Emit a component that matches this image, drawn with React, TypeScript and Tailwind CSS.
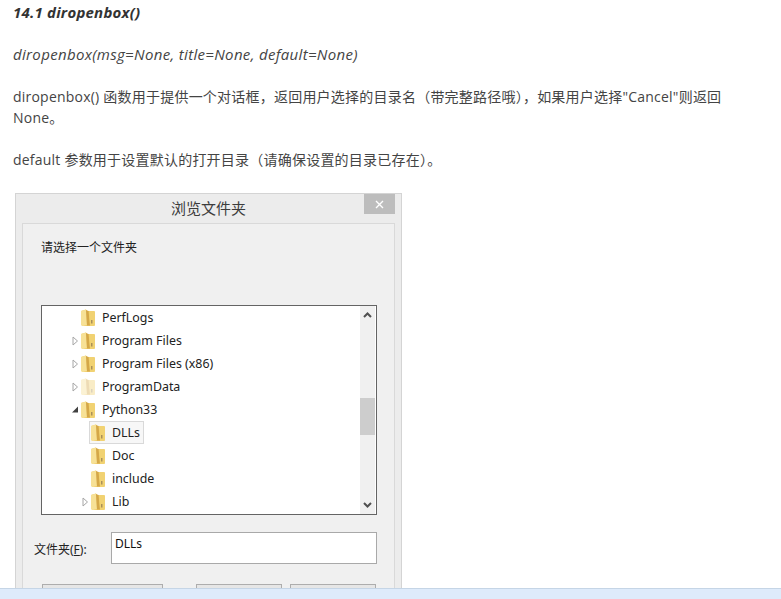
const textFont = { fontFamily: '"Open Sans", "Noto Sans CJK SC", sans-serif' };

function Folder({ faded }: { faded?: boolean }) {
  return (
    <svg width="16" height="18" viewBox="0 0 16 18" className={faded ? 'shrink-0 opacity-40' : 'shrink-0'}>
      <path d="M1 2 L6 0.5 L7 2 L14 2 L15 3 L15 16 L14 17 L3 17 L1 16 Z" fill="#efcb66" />
      <path d="M1 2 L6 0.5 L7 16 L3 17 L1 16 Z" fill="#f7e196" />
      <path d="M6 1 L8.5 2 L10 16.5 L7 16.5 Z" fill="#d4a748" />
      <path d="M9 2 L14 2 L15 3 L15 16 L14 17 L10 17 Z" fill="#f1d272" />
      <path d="M11 11 L12.5 11 L12.5 14.5 L11 14.5 Z" fill="#a9905a" />
    </svg>
  );
}

function Arrow({ state }: { state: 'none' | 'closed' | 'open' }) {
  if (state === 'none') return <span className="w-2 shrink-0" />;
  if (state === 'open') {
    return (
      <svg width="8" height="9" viewBox="0 0 8 9" className="shrink-0">
        <path d="M1 7.5 L7 7.5 L7 1.5 Z" fill="#404040" />
      </svg>
    );
  }
  return (
    <svg width="8" height="10" viewBox="0 0 8 10" className="shrink-0">
      <path d="M2 1 L6.5 5 L2 9 Z" fill="#fff" stroke="#a6a6a6" />
    </svg>
  );
}

const rows = [
  { name: 'PerfLogs', indent: 'pl-[29px]', arrow: 'none' as const },
  { name: 'Program Files', indent: 'pl-[29px]', arrow: 'closed' as const },
  { name: 'Program Files (x86)', indent: 'pl-[29px]', arrow: 'closed' as const },
  { name: 'ProgramData', indent: 'pl-[29px]', arrow: 'closed' as const, faded: true },
  { name: 'Python33', indent: 'pl-[29px]', arrow: 'open' as const },
  { name: 'DLLs', indent: 'pl-[39px]', arrow: 'none' as const, selected: true },
  { name: 'Doc', indent: 'pl-[39px]', arrow: 'none' as const },
  { name: 'include', indent: 'pl-[39px]', arrow: 'none' as const },
  { name: 'Lib', indent: 'pl-[39px]', arrow: 'closed' as const },
];

function FileTree() {
  return (
    <div className="flex h-[210px] border border-[#646464] bg-white">
      <div className="flex-1">
        {rows.map((row) => (
          <div key={row.name} className={`flex h-[23px] items-center ${row.indent}`}>
            <Arrow state={row.arrow} />
            <div
              className={`flex h-[23px] items-center gap-[6px] border pr-[3px] ${
                row.selected ? 'border-[#d9d9d9] bg-[#f7f7f7]' : 'border-transparent'
              }`}
            >
              <Folder faded={row.faded} />
              <span className="text-[12.4px] text-[#222]">{row.name}</span>
            </div>
          </div>
        ))}
      </div>
      <div className="relative mr-[1px] flex w-[15px] flex-col items-center justify-between bg-[#f0f0f0] py-[6px]">
        <svg width="9" height="6" viewBox="0 0 9 6">
          <path d="M1 5 L4.5 1.5 L8 5" fill="none" stroke="#505050" strokeWidth="2" />
        </svg>
        <svg width="9" height="6" viewBox="0 0 9 6">
          <path d="M1 1 L4.5 4.5 L8 1" fill="none" stroke="#505050" strokeWidth="2" />
        </svg>
        <div className="absolute left-0 top-[92px] h-[37px] w-[15px] bg-[#cdcdcd]" />
      </div>
    </div>
  );
}

function Dialog() {
  return (
    <div
      className="ml-[15px] mt-[23px] w-[387px] border border-[#d4d4d4] bg-[#ececec] px-[6px] tracking-normal"
      style={{ fontFamily: '"Noto Sans", "Noto Sans CJK SC", sans-serif' }}
    >
      <div className="relative flex h-[29px] items-center justify-center">
        <span className="text-[15px] text-[#3c3c3c]">浏览文件夹</span>
        <div className="absolute right-0 top-0 flex h-[20px] w-[31px] items-center justify-center bg-[#bdbdbd]">
          <svg width="9" height="9" viewBox="0 0 9 9">
            <path d="M1 1 L8 8 M8 1 L1 8" stroke="#fff" strokeWidth="1.4" />
          </svg>
        </div>
      </div>
      <div className="h-[380px] border border-b-0 border-[#d9d9d9] bg-[#f0f0f0] pl-[18px] pr-[17px]">
        <div className="flex h-[81px] items-start pt-[13px] text-[12px] text-[#222]">请选择一个文件夹</div>
        <FileTree />
        <div className="mt-[17px] flex h-[32px]">
          <div className="-ml-[7px] flex w-[77px] items-center pt-[2px] text-[12px] text-[#222]">
            文件夹(<span className="underline">F</span>):
          </div>
          <div className="flex-1 border border-[#a9a9a9] bg-white pl-[3px] text-[12px] text-[#111]">DLLs</div>
        </div>
        <div className="mt-[20px] flex pl-[1px]">
          <div className="h-[24px] w-[121px] border border-[#adadad] bg-[#e6e6e6]" />
          <div className="ml-[33px] h-[24px] w-[86px] border border-[#adadad] bg-[#e6e6e6]" />
          <div className="ml-[8px] h-[24px] w-[86px] border border-[#adadad] bg-[#e6e6e6]" />
        </div>
      </div>
    </div>
  );
}

export default function App() {
  return (
    <div
      className="relative h-[599px] w-[781px] overflow-hidden bg-white text-[14px] leading-[21px] tracking-[0.22px] text-[#444]"
      style={textFont}
    >
      <div className="pl-[13px] pr-[40px] pt-[2px]">
        <p className="text-[15px] font-bold italic text-[#333]">14.1 diropenbox()</p>
        <p className="mt-[21px] text-[15px] italic tracking-[0.33px]">diropenbox(msg=None, title=None, default=None)</p>
        <p className="mt-[21px]">
          diropenbox() 函数用于提供一个对话框，返回用户选择的目录名（带完整路径哦），如果用户选择"Cancel"则返回 None。
        </p>
        <p className="mt-[21px]">default 参数用于设置默认的打开目录（请确保设置的目录已存在）。</p>
      </div>
      <Dialog />
      <div className="absolute bottom-0 left-0 h-[11px] w-full border-t border-[#c5d5e6] bg-[#deebfb]" />
    </div>
  );
}
